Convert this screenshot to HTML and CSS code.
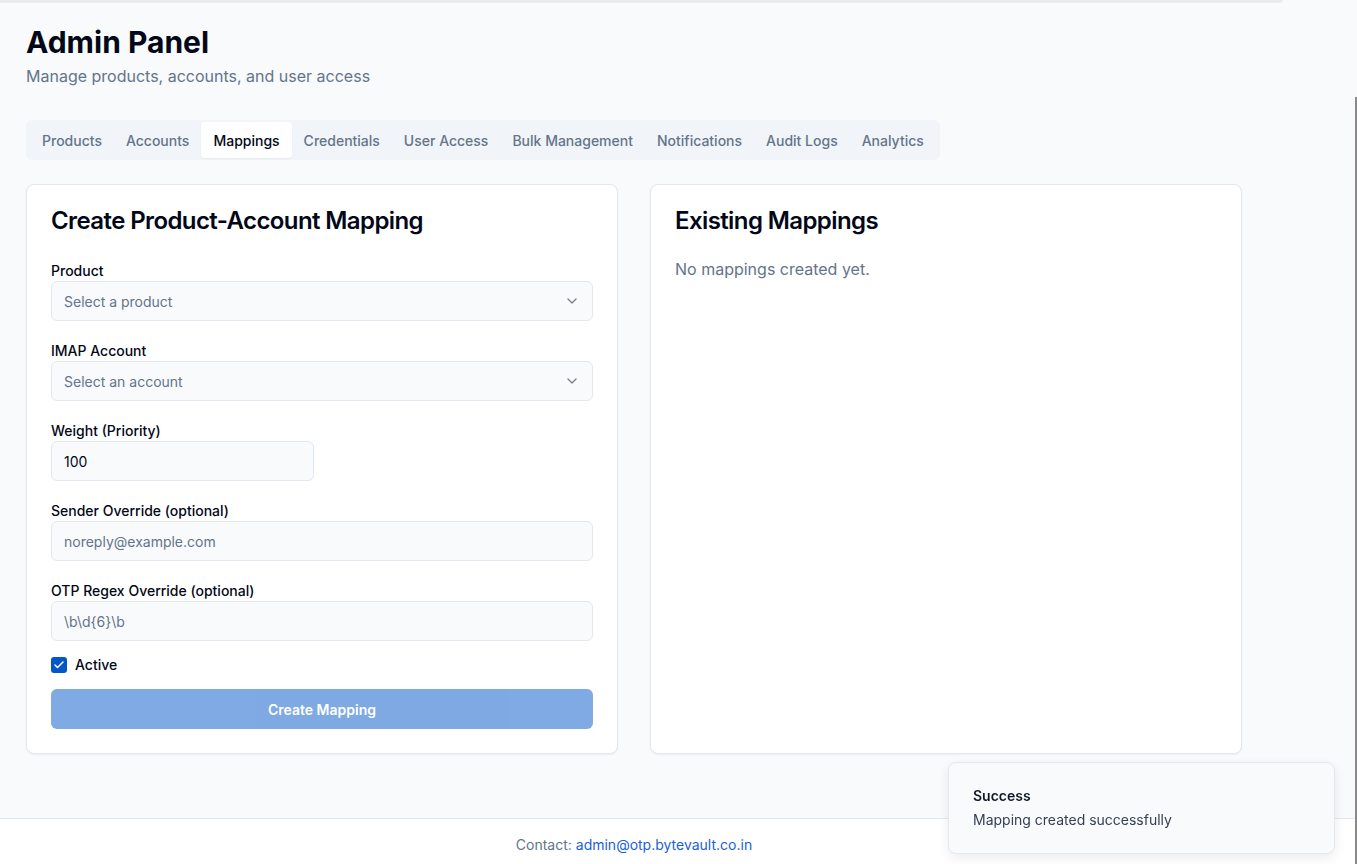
FILE: index.html
```html
<!DOCTYPE html>
<html lang="en">
<head>
<meta charset="utf-8">
<title>Admin Panel</title>
<link rel="stylesheet" href="styles.css">
</head>
<body>
<div class="top-strip"></div>
<main class="page">
  <header class="page-header">
    <h1 class="page-title">Admin Panel</h1>
    <p class="page-subtitle">Manage products, accounts, and user access</p>
  </header>

  <nav class="tabs">
    <button class="tab">Products</button>
    <button class="tab">Accounts</button>
    <button class="tab tab-active">Mappings</button>
    <button class="tab">Credentials</button>
    <button class="tab">User Access</button>
    <button class="tab">Bulk Management</button>
    <button class="tab">Notifications</button>
    <button class="tab">Audit Logs</button>
    <button class="tab">Analytics</button>
  </nav>

  <section class="cards">
    <div class="card">
      <h2 class="card-title">Create Product-Account Mapping</h2>
      <form class="form">
        <div class="field">
          <label class="label">Product</label>
          <button type="button" class="select">
            <span>Select a product</span>
            <svg class="chev" width="16" height="16" viewBox="0 0 24 24" fill="none" stroke="currentColor" stroke-width="2" stroke-linecap="round" stroke-linejoin="round"><path d="m6 9 6 6 6-6"/></svg>
          </button>
        </div>
        <div class="field">
          <label class="label">IMAP Account</label>
          <button type="button" class="select">
            <span>Select an account</span>
            <svg class="chev" width="16" height="16" viewBox="0 0 24 24" fill="none" stroke="currentColor" stroke-width="2" stroke-linecap="round" stroke-linejoin="round"><path d="m6 9 6 6 6-6"/></svg>
          </button>
        </div>
        <div class="field-grid">
          <div class="field">
            <label class="label">Weight (Priority)</label>
            <input class="input" type="text" value="100">
          </div>
        </div>
        <div class="field">
          <label class="label">Sender Override (optional)</label>
          <input class="input" type="text" placeholder="noreply@example.com">
        </div>
        <div class="field">
          <label class="label">OTP Regex Override (optional)</label>
          <input class="input" type="text" placeholder="\b\d{6}\b">
        </div>
        <div class="check-row">
          <span class="checkbox">
            <svg width="12" height="12" viewBox="0 0 24 24" fill="none" stroke="#ffffff" stroke-width="3" stroke-linecap="round" stroke-linejoin="round"><path d="M20 6 9 17l-5-5"/></svg>
          </span>
          <span class="check-label">Active</span>
        </div>
        <button type="button" class="btn-primary" disabled>Create Mapping</button>
      </form>
    </div>

    <div class="card">
      <h2 class="card-title">Existing Mappings</h2>
      <p class="empty">No mappings created yet.</p>
    </div>
  </section>
</main>

<footer class="footer">
  <div class="footer-inner">Contact: <a class="footer-link" href="#">admin@otp.bytevault.co.in</a></div>
</footer>

<div class="toast">
  <div class="toast-title">Success</div>
  <div class="toast-desc">Mapping created successfully</div>
</div>

<div class="scroll-thumb"></div>
</body>
</html>
```

FILE: styles.css
```css
* { box-sizing: border-box; }

html { overflow: hidden; }

body {
  margin: 0;
  background: #f8fafc;
  color: #020817;
  font-family: Inter, "Noto Sans", "Liberation Sans", sans-serif;
  font-size: 14px;
  line-height: 20px;
}

.top-strip {
  position: absolute;
  top: 0;
  left: 0;
  width: 1283px;
  height: 3px;
  background: #ececee;
  border-radius: 0 0 3px 0;
}

.page {
  width: 1268px;
  padding: 24px 26px 64px;
}

.page-title {
  margin: 0;
  font-size: 30px;
  line-height: 36px;
  font-weight: 700;
  letter-spacing: 0;
  color: #020817;
}

.page-subtitle {
  margin: 4px 0 0;
  font-size: 16px;
  line-height: 24px;
  color: #64748b;
}

.tabs {
  display: inline-flex;
  align-items: center;
  margin-top: 32px;
  height: 40px;
  padding: 2px 4px;
  background: #f1f5f9;
  border-radius: 6px;
}

.tab {
  height: 36px;
  padding: 0 12px;
  border: 0;
  background: transparent;
  font-family: inherit;
  font-size: 14px;
  font-weight: 500;
  color: #64748b;
  border-radius: 4px;
  cursor: pointer;
}

.tab-active {
  background: #ffffff;
  color: #020817;
  box-shadow: 0 1px 2px rgba(0, 0, 0, 0.05);
}

.cards {
  display: grid;
  grid-template-columns: 1fr 1fr;
  gap: 32px;
  margin-top: 24px;
}

.card {
  background: #ffffff;
  border: 1px solid #e2e8f0;
  border-radius: 8px;
  box-shadow: 0 1px 2px rgba(0, 0, 0, 0.05);
  padding: 24px;
}

.card-title {
  margin: 0;
  font-size: 24px;
  line-height: 24px;
  font-weight: 600;
  letter-spacing: -0.025em;
  color: #020817;
}

.form {
  display: flex;
  flex-direction: column;
  margin-top: 28px;
}

.field {
  display: flex;
  flex-direction: column;
  margin-bottom: 20px;
}

.field-grid {
  display: grid;
  grid-template-columns: 1fr 1fr;
  gap: 16px;
}

.label {
  font-size: 14px;
  line-height: 20px;
  font-weight: 500;
  color: #020817;
}

.select,
.input {
  height: 40px;
  width: 100%;
  border: 1px solid #e2e8f0;
  border-radius: 6px;
  background: #f8fafc;
  padding: 0 12px;
  font-family: inherit;
  font-size: 14px;
  color: #020817;
  outline: none;
}

.select {
  display: flex;
  align-items: center;
  justify-content: space-between;
  color: #64748b;
  text-align: left;
}

.chev {
  color: #020817;
  opacity: 0.5;
}

.input::placeholder {
  color: #64748b;
}

.check-row {
  display: flex;
  align-items: center;
  gap: 8px;
  height: 20px;
  margin-top: -6px;
}

.checkbox {
  width: 16px;
  height: 16px;
  border-radius: 3px;
  background: #0156c8;
  display: flex;
  align-items: center;
  justify-content: center;
}

.check-label {
  font-size: 14px;
  font-weight: 500;
}

.btn-primary {
  margin-top: 14px;
  height: 40px;
  width: 100%;
  border: 0;
  border-radius: 6px;
  background: #0156c8;
  opacity: 0.5;
  color: #ffffff;
  font-family: inherit;
  font-size: 14px;
  font-weight: 600;
}

.empty {
  margin: 24px 0 0;
  font-size: 16px;
  line-height: 24px;
  color: #64748b;
}

.footer {
  background: #ffffff;
  border-top: 1px solid #e2e8f0;
}

.footer-inner {
  width: 1268px;
  text-align: center;
  padding: 16px 0;
  color: #64748b;
  font-size: 14px;
  line-height: 20px;
}

.footer-link {
  color: #1a5fd6;
  text-decoration: none;
}

.toast {
  position: fixed;
  right: 22px;
  bottom: 10px;
  width: 387px;
  padding: 23px 24px;
  background: #f9fafb;
  border: 1px solid #e2e8f0;
  border-radius: 8px;
  box-shadow: 0 4px 12px rgba(0, 0, 0, 0.08);
}

.toast-title {
  font-size: 14px;
  line-height: 20px;
  font-weight: 600;
  color: #0f172a;
}

.toast-desc {
  margin-top: 4px;
  font-size: 14px;
  line-height: 20px;
  color: #334155;
}

.scroll-thumb {
  position: fixed;
  right: 0;
  top: 97px;
  bottom: 0;
  width: 2px;
  background: #8a8a8a;
}
```
